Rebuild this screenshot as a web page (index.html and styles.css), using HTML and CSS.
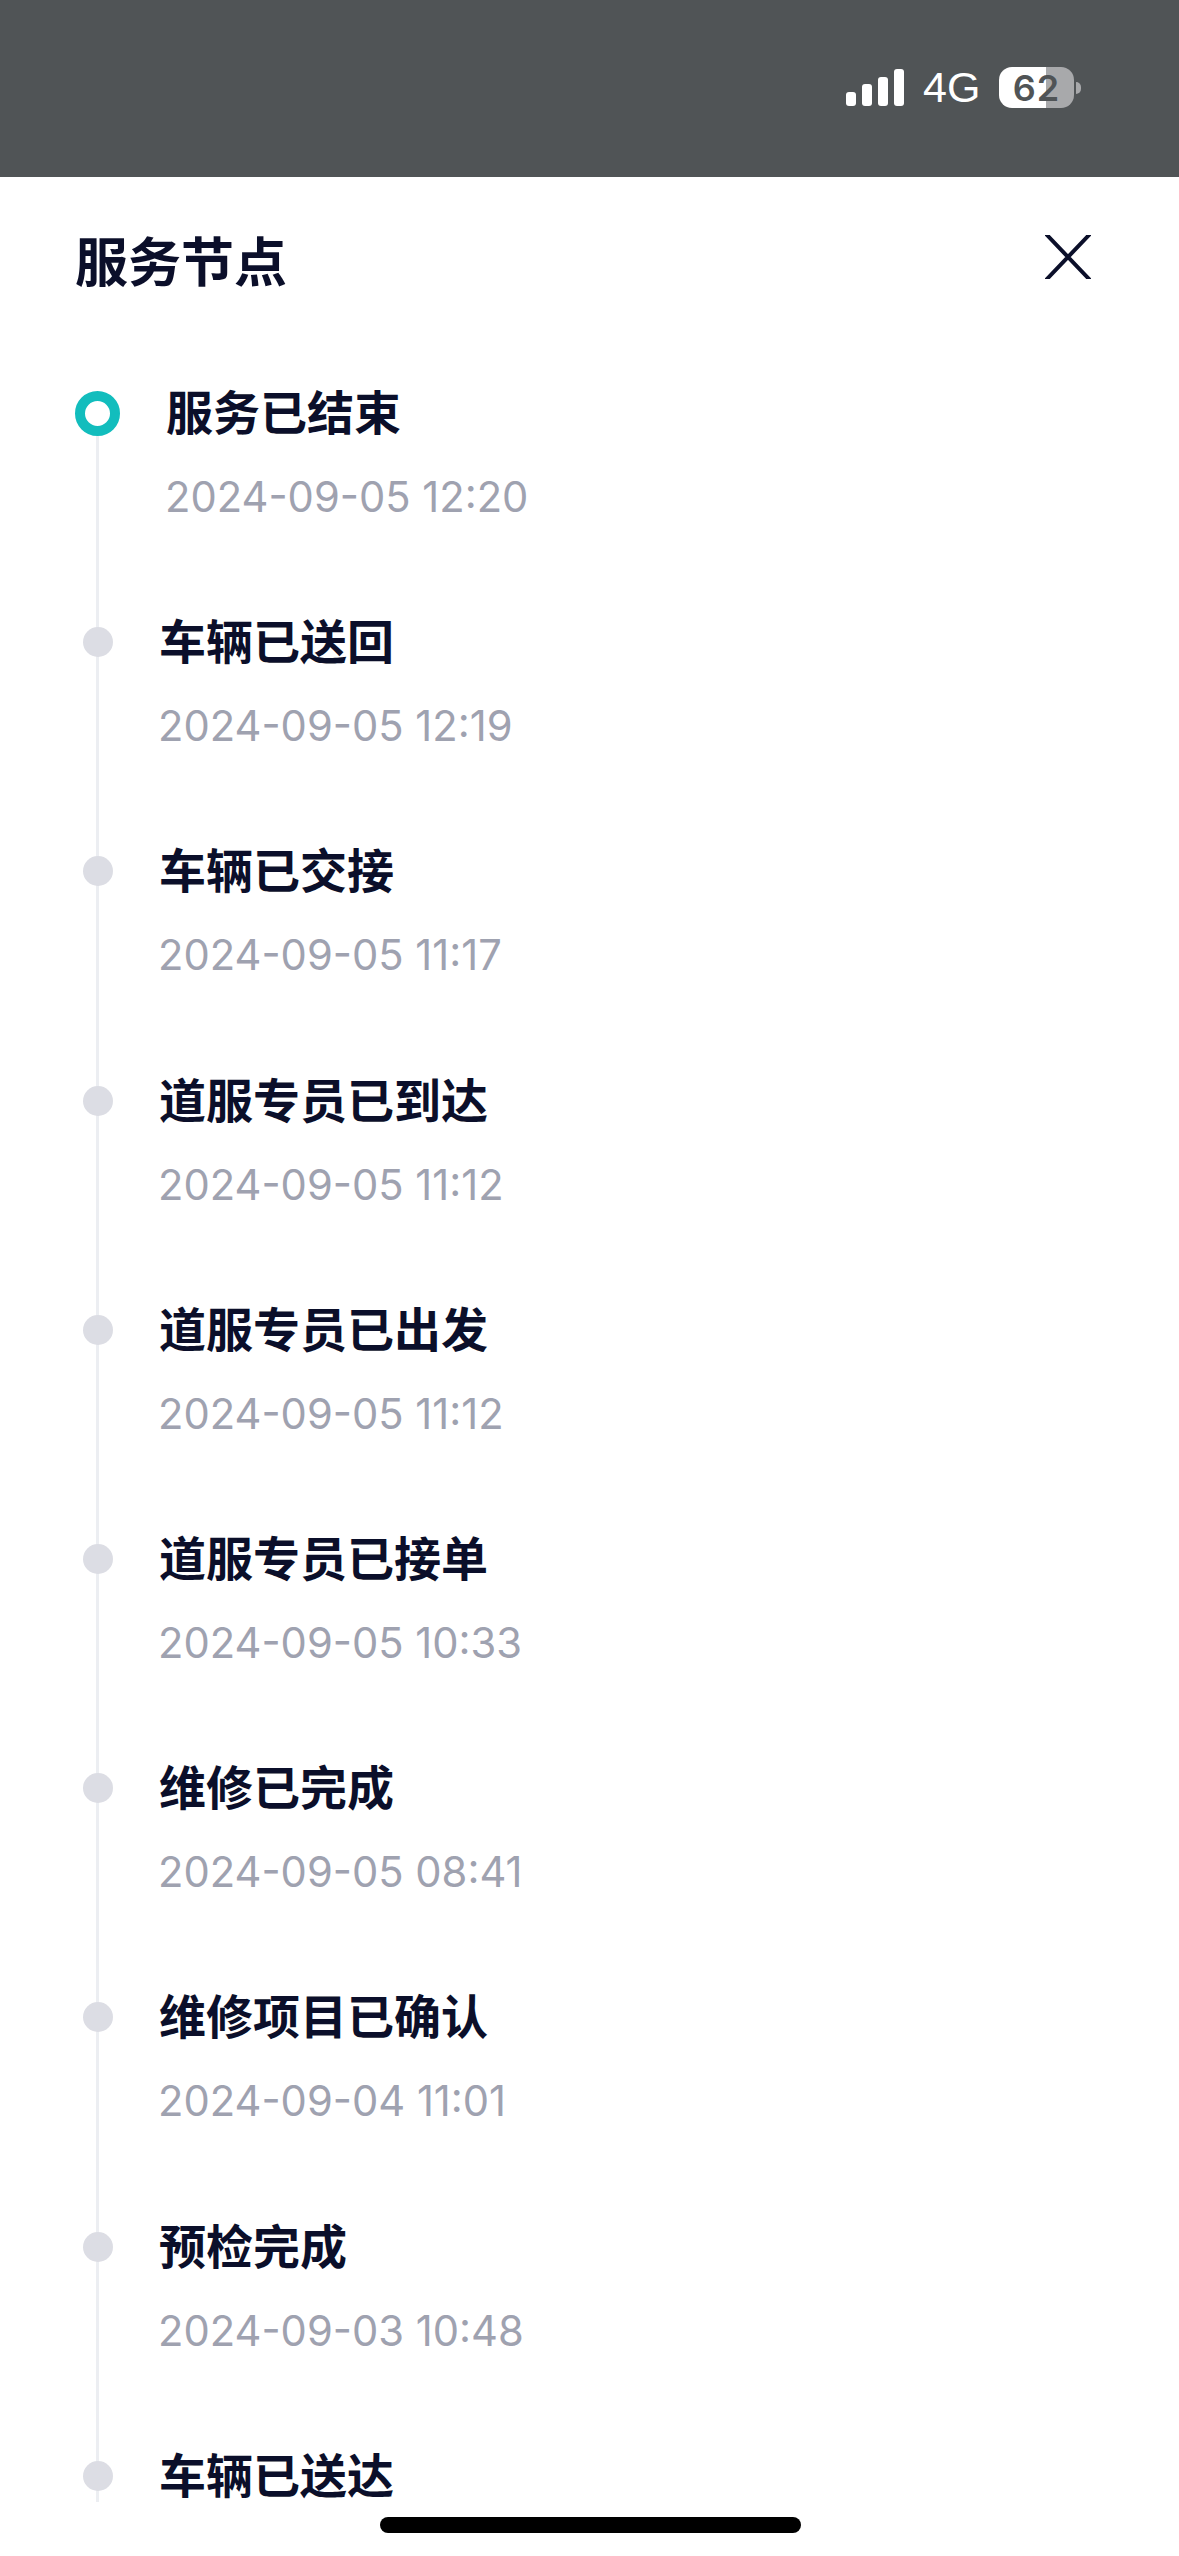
FILE: index.html
```html
<!DOCTYPE html>
<html lang="zh-CN">
<head>
    <meta charset="UTF-8">
    <meta name="viewport" content="width=device-width, initial-scale=1.0">
    <title>服务节点</title>
    <link rel="stylesheet" href="styles.css">
</head>
<body>

<div class="status-bar">
    <div class="signal">
        <span class="bar bar-1"></span>
        <span class="bar bar-2"></span>
        <span class="bar bar-3"></span>
        <span class="bar bar-4"></span>
    </div>
    <span class="network">4G</span>
    <div class="battery">
        <div class="battery-body"><span class="battery-level">62</span></div>
        <span class="battery-nub"></span>
    </div>
</div>

<div class="sheet">
    <div class="sheet-header">
        <h2 class="sheet-title">服务节点</h2>
        <svg class="close-icon" viewBox="0 0 46 44" width="46" height="44">
            <path d="M1 -1L45 45M45 -1L1 45" fill="none" stroke="#0b0f2a" stroke-width="4"/>
        </svg>
    </div>

    <div class="timeline">
        <div class="item item-current">
            <div class="rail"><span class="dot"></span></div>
            <div class="info">
                <div class="name">服务已结束</div>
                <div class="time">2024-09-05 12:20</div>
            </div>
        </div>
        <div class="item">
            <div class="rail"><span class="dot"></span></div>
            <div class="info">
                <div class="name">车辆已送回</div>
                <div class="time">2024-09-05 12:19</div>
            </div>
        </div>
        <div class="item">
            <div class="rail"><span class="dot"></span></div>
            <div class="info">
                <div class="name">车辆已交接</div>
                <div class="time">2024-09-05 11:17</div>
            </div>
        </div>
        <div class="item">
            <div class="rail"><span class="dot"></span></div>
            <div class="info">
                <div class="name">道服专员已到达</div>
                <div class="time">2024-09-05 11:12</div>
            </div>
        </div>
        <div class="item">
            <div class="rail"><span class="dot"></span></div>
            <div class="info">
                <div class="name">道服专员已出发</div>
                <div class="time">2024-09-05 11:12</div>
            </div>
        </div>
        <div class="item">
            <div class="rail"><span class="dot"></span></div>
            <div class="info">
                <div class="name">道服专员已接单</div>
                <div class="time">2024-09-05 10:33</div>
            </div>
        </div>
        <div class="item">
            <div class="rail"><span class="dot"></span></div>
            <div class="info">
                <div class="name">维修已完成</div>
                <div class="time">2024-09-05 08:41</div>
            </div>
        </div>
        <div class="item">
            <div class="rail"><span class="dot"></span></div>
            <div class="info">
                <div class="name">维修项目已确认</div>
                <div class="time">2024-09-04 11:01</div>
            </div>
        </div>
        <div class="item">
            <div class="rail"><span class="dot"></span></div>
            <div class="info">
                <div class="name">预检完成</div>
                <div class="time">2024-09-03 10:48</div>
            </div>
        </div>
        <div class="item item-last">
            <div class="rail"><span class="dot"></span></div>
            <div class="info">
                <div class="name">车辆已送达</div>
            </div>
        </div>
    </div>
</div>

<div class="home-indicator"></div>

</body>
</html>
```

FILE: styles.css
```css
html, body { margin: 0; padding: 0; }
body {
    width: 1179px;
    height: 2556px;
    overflow: hidden;
    position: relative;
    background: #fff;
    font-family: "Inter", "Noto Sans CJK SC", sans-serif;
}

/* status bar */
.status-bar {
    height: 177px;
    box-sizing: border-box;
    background: #505456;
    display: flex;
    align-items: flex-start;
    padding: 67px 98px 0 846px;
    color: #fff;
}
.signal {
    display: flex;
    align-items: flex-end;
    gap: 6px;
    height: 39px;
    width: 58px;
}
.bar { width: 10px; background: #fff; border-radius: 3px; }
.bar-1 { height: 14px; }
.bar-2 { height: 22px; }
.bar-3 { height: 29px; }
.bar-4 { height: 37px; }
.network {
    font-family: "Liberation Sans", sans-serif;
    font-size: 43px;
    line-height: 41px;
    margin-left: 19px;
    width: 76px;
}
.battery { display: flex; align-items: center; gap: 2px; height: 41px; }
.battery-body {
    width: 75px;
    height: 41px;
    border-radius: 13px;
    background: linear-gradient(to right, #fff 47px, #a8a9ab 47px);
    display: flex;
    align-items: center;
    justify-content: center;
}
.battery-level {
    font-family: "Inter", sans-serif;
    font-size: 36px;
    font-weight: 600;
    letter-spacing: 1px;
    color: #505456;
}
.battery-nub {
    width: 5px;
    height: 12px;
    background: #a8a9ab;
    border-radius: 0 5px 5px 0;
}

/* sheet */
.sheet-header {
    display: flex;
    justify-content: space-between;
    align-items: flex-start;
    height: 154px;
    padding: 52px 88px 0 75px;
}
.sheet-title {
    margin: 0;
    font-family: "Noto Sans CJK SC", sans-serif;
    font-size: 53px;
    line-height: 60px;
    font-weight: 700;
    color: #0b0f2a;
}
.close-icon { margin-top: 6px; }

/* timeline */
.timeline { padding-left: 75px; }
.item { display: flex; height: 229.2px; }
.rail {
    width: 45px;
    display: flex;
    justify-content: center;
    align-items: flex-start;
    background: linear-gradient(#eceef2, #eceef2) center top / 3px 100% no-repeat;
}
.dot {
    width: 30px;
    height: 30px;
    margin-top: 15px;
    border-radius: 50%;
    background: #dcdde4;
}
.info { margin-left: 39px; margin-top: -3px; }
.name {
    font-family: "Noto Sans CJK SC", sans-serif;
    font-size: 47px;
    line-height: 60px;
    font-weight: 700;
    color: #0b0f2a;
}
.time {
    margin-top: 33px;
    margin-left: -1px;
    font-size: 41.7px;
    line-height: 48px;
    color: #9fa2b0;
}
.item-current .rail {
    background-position: center bottom;
    background-size: 3px calc(100% - 30px);
}
.item-current .dot {
    width: 45px;
    height: 45px;
    margin-top: 8px;
    box-sizing: border-box;
    border: 10px solid #12bdbd;
    background: #fff;
}
.item-current .info { margin-left: 46px; }
.item-last { height: 56px; }

/* home indicator sits over the page */
.home-indicator {
    position: absolute;
    left: 380px;
    top: 2517px;
    width: 421px;
    height: 16px;
    border-radius: 8px;
    background: #000;
}
```
